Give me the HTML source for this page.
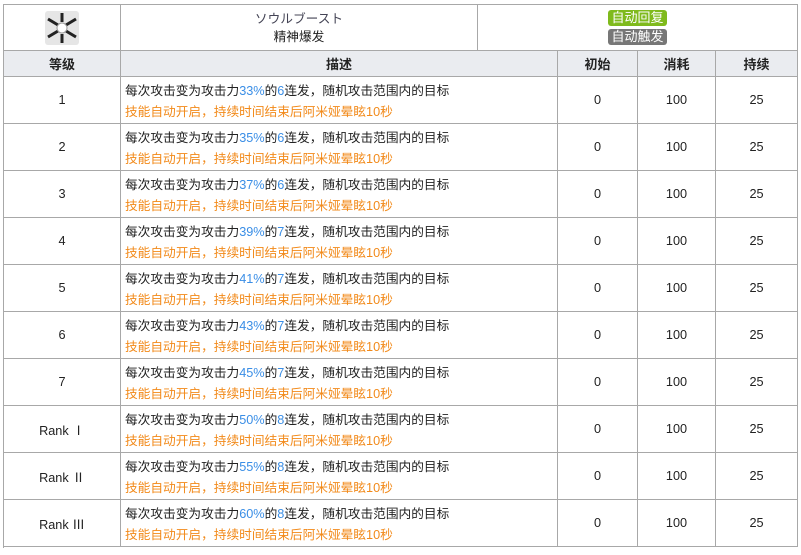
<!DOCTYPE html>
<html><head><meta charset="utf-8"><style>
*{margin:0;padding:0;box-sizing:border-box}
body{width:801px;height:555px;background:#fff;font-family:"Liberation Sans","Noto Sans CJK SC",sans-serif;font-size:12.7px;color:#222;position:relative;overflow:hidden}
.c{position:absolute;border-right:1px solid #a8a8a8;border-bottom:1px solid #a8a8a8;display:flex;align-items:center;justify-content:center;text-align:center}
.h{background:#eaecf0;font-weight:bold;font-size:13px}
.d{justify-content:flex-start;text-align:left;padding-left:4px;line-height:21px;display:block;padding-top:4px;white-space:nowrap}
.b{color:#3a8ee6}.o{color:#f28a1a}
.badge{display:inline-block;color:#fff;border-radius:3px;padding:0 3px;line-height:16px;font-size:13px}
</style></head><body>
<div style="position:absolute;left:3px;top:4px;width:795px;height:544px;border-left:1px solid #a8a8a8;border-top:1px solid #a8a8a8"></div>
<div class="c" style="left:3px;top:4px;width:118px;height:47px;border-left:1px solid #a8a8a8;border-top:1px solid #a8a8a8">
<svg width="34" height="34" viewBox="0 0 34 34"><rect width="34" height="34" rx="3" fill="#e6e6e6"/><g stroke="#222" stroke-width="3"><path d="M3 8L13 14M31 8L21 14M3 26L13 20M31 26L21 20M17 2V11M17 32V23"/></g><circle cx="17" cy="17" r="5" fill="#fff" stroke="#999"/></svg></div>
<div class="c" style="left:121px;top:4px;width:357px;height:47px;border-top:1px solid #a8a8a8;flex-direction:column;line-height:18px"><div style="color:#445">ソウルブースト</div><div>精神爆发</div></div>
<div class="c" style="left:478px;top:4px;width:320px;height:47px;border-top:1px solid #a8a8a8;flex-direction:column;gap:3px"><span class="badge" style="background:#7fba1c">自动回复</span><span class="badge" style="background:#777">自动触发</span></div>
<div class="c h" style="left:3px;top:51px;width:118px;height:26px;border-left:1px solid #a8a8a8">等级</div>
<div class="c h" style="left:121px;top:51px;width:437px;height:26px">描述</div>
<div class="c h" style="left:558px;top:51px;width:80px;height:26px">初始</div>
<div class="c h" style="left:638px;top:51px;width:78px;height:26px">消耗</div>
<div class="c h" style="left:716px;top:51px;width:82px;height:26px">持续</div>
<script>
var rows=[["1","33","6"],["2","35","6"],["3","37","6"],["4","39","7"],["5","41","7"],["6","43","7"],["7","45","7"],["Rank Ⅰ","50","8"],["Rank Ⅱ","55","8"],["Rank Ⅲ","60","8"]];
var h="";rows.forEach(function(r,i){var t=77+47*i;
h+='<div class="c" style="left:3px;top:'+t+'px;width:118px;height:47px;border-left:1px solid #a8a8a8">'+r[0]+'</div>';
h+='<div class="c d" style="left:121px;top:'+t+'px;width:437px;height:47px">每次攻击变为攻击力<span class="b">'+r[1]+'%</span>的<span class="b">'+r[2]+'</span>连发，随机攻击范围内的目标<br><span class="o">技能自动开启，持续时间结束后阿米娅晕眩10秒</span></div>';
h+='<div class="c" style="left:558px;top:'+t+'px;width:80px;height:47px">0</div>';
h+='<div class="c" style="left:638px;top:'+t+'px;width:78px;height:47px">100</div>';
h+='<div class="c" style="left:716px;top:'+t+'px;width:82px;height:47px">25</div>';});
document.write(h);
</script>
</body></html>
